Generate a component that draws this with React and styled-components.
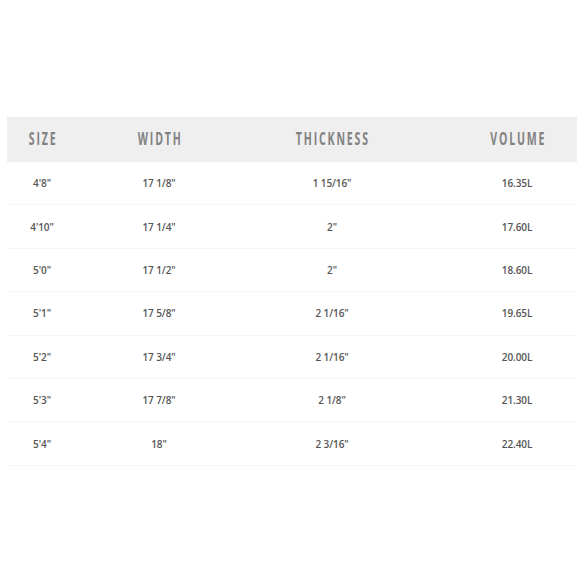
import React from "react";
import styled, { createGlobalStyle } from "styled-components";

const GlobalStyle = createGlobalStyle`
  html, body {
    margin: 0;
    padding: 0;
    background: #ffffff;
  }
`;

const Page = styled.div`
  width: 584px;
  height: 584px;
  box-sizing: border-box;
  padding: 117px 7px 0;
  background: #fff;
`;

const Table = styled.div`
  width: 570px;
`;

const Row = styled.div`
  display: grid;
  grid-template-columns: 70px 164px 182px 154px;
  align-items: center;
  height: ${(p) => (p.$head ? "45px" : "43.4px")};
  padding-bottom: ${(p) => (p.$head ? "2px" : "0")};
  background: ${(p) => (p.$head ? "#efefef" : "#fff")};
  border-bottom: ${(p) => (p.$head ? "none" : "1px solid #f6f6f6")};
  box-sizing: border-box;
`;

const HeadCell = styled.div`
  text-align: center;
  padding-left: ${(p) => (p.$shift || 0) + 2}px;
`;

/* the header face is a tall condensed grotesque; squeeze a bold sans to match */
const HeadLabel = styled.span`
  display: inline-block;
  transform: scaleX(0.62);
  font-family: "Open Sans", "Liberation Sans", sans-serif;
  font-weight: 700;
  font-size: 17px;
  letter-spacing: 3px;
  color: #828282;
`;

const Cell = styled.div`
  text-align: center;
  padding-left: ${(p) => p.$shift || 0}px;
  font-family: "Open Sans", "Liberation Sans", sans-serif;
  font-weight: 600;
  font-size: 10px;
  letter-spacing: -0.1px;
  color: #555;
`;

const rows = [
  ["4'8\"", "17 1/8\"", "1 15/16\"", "16.35L"],
  ["4'10\"", "17 1/4\"", "2\"", "17.60L"],
  ["5'0\"", "17 1/2\"", "2\"", "18.60L"],
  ["5'1\"", "17 5/8\"", "2 1/16\"", "19.65L"],
  ["5'2\"", "17 3/4\"", "2 1/16\"", "20.00L"],
  ["5'3\"", "17 7/8\"", "2 1/8\"", "21.30L"],
  ["5'4\"", "18\"", "2 3/16\"", "22.40L"],
];

const headers = ["SIZE", "WIDTH", "THICKNESS", "VOLUME"];

export default function App() {
  return (
    <>
      <GlobalStyle />
      <Page>
        <Table>
          <Row $head>
            {headers.map((h, i) => (
              <HeadCell key={h} $shift={i === 3 ? 34 : 0}>
                <HeadLabel>{h}</HeadLabel>
              </HeadCell>
            ))}
          </Row>
          {rows.map((r) => (
            <Row key={r[0]}>
              {r.map((v, i) => (
                <Cell key={i} $shift={i === 3 ? 34 : 0}>
                  {v}
                </Cell>
              ))}
            </Row>
          ))}
        </Table>
      </Page>
    </>
  );
}
